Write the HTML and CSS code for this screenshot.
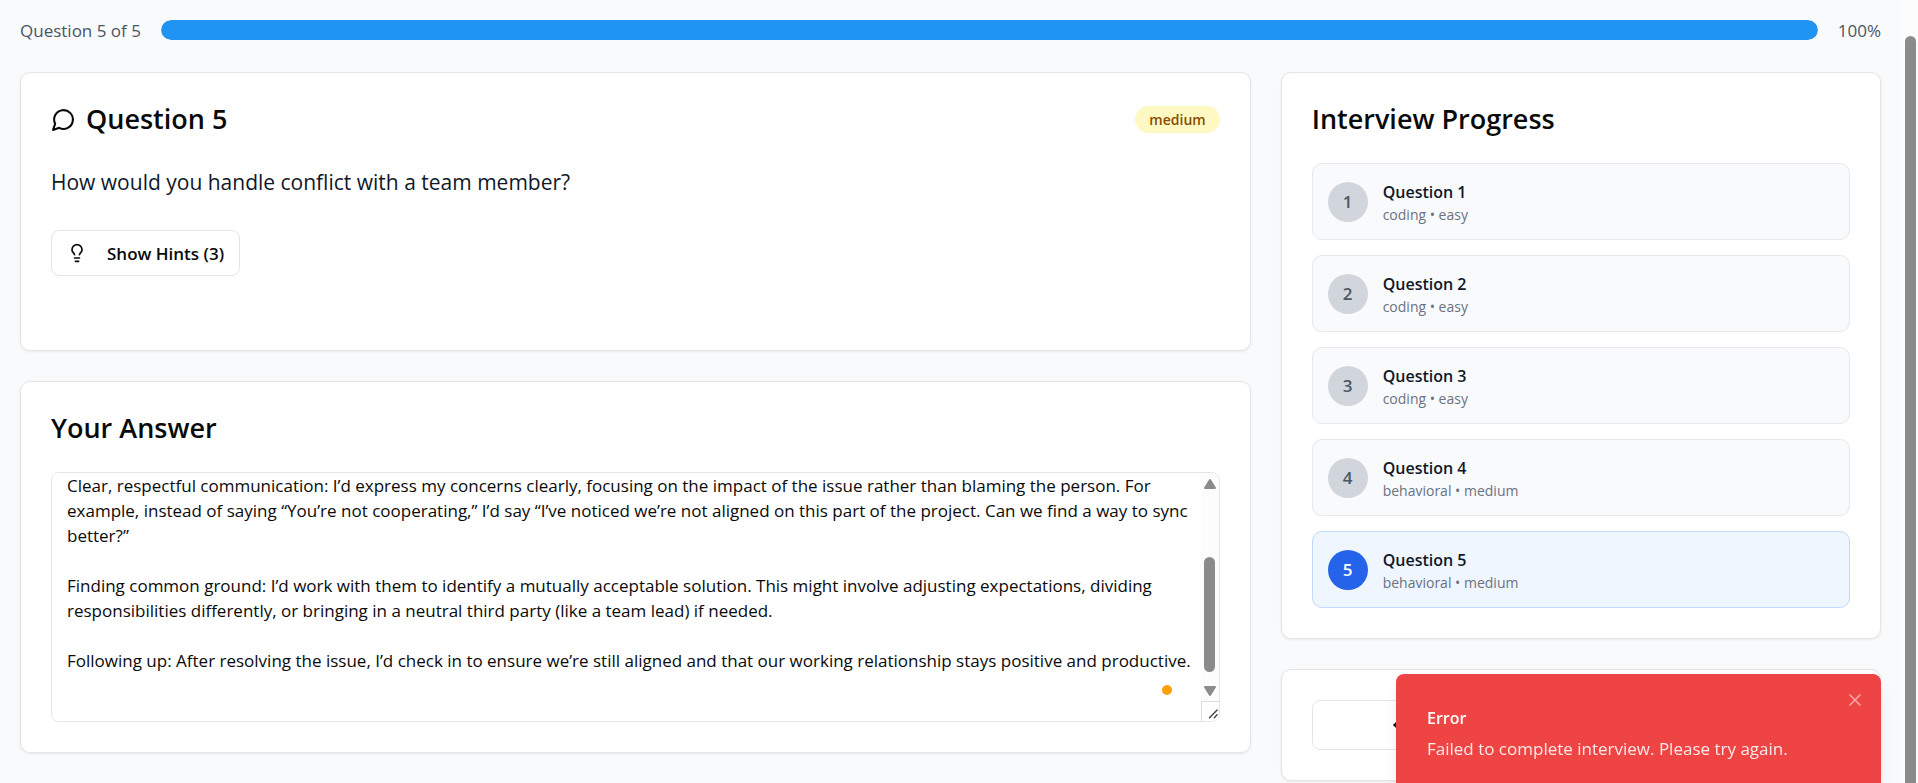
FILE: index.html
```html
<!DOCTYPE html>
<html lang="en">
<head>
<meta charset="utf-8">
<meta name="viewport" content="width=device-width, initial-scale=1">
<title>Interview</title>
<link rel="stylesheet" href="styles.css">
</head>
<body>
<div class="viewport">
  <div class="page">
    <header class="progress-row">
      <span id="progress-label">Question 5 of 5</span>
      <div class="progress" role="progressbar" aria-labelledby="progress-label" aria-valuenow="100" aria-valuemin="0" aria-valuemax="100">
        <div class="progress-fill" style="width: 100%"></div>
      </div>
      <span>100%</span>
    </header>

    <main class="columns">
      <div class="stack">
        <section class="card question-card">
          <div class="card-head">
            <h2 class="card-title">
              <svg class="title-icon" viewBox="0 0 24 24" aria-hidden="true"><path d="M7.9 20A9 9 0 1 0 4 16.1L2 22Z"/></svg>
              Question 5
            </h2>
            <span class="pill">medium</span>
          </div>
          <p class="question-text">How would you handle conflict with a team member?</p>
          <button type="button" class="hint-button">
            <svg class="hint-icon" viewBox="0 0 24 24" aria-hidden="true"><path d="M15 14c.2-1 .7-1.7 1.5-2.5 1-.9 1.5-2.2 1.5-3.5A6 6 0 0 0 6 8c0 1 .2 2.2 1.5 3.5.7.7 1.3 1.5 1.5 2.5"/><path d="M9 18h6"/><path d="M10 22h4"/></svg>
            Show Hints (3)
          </button>
        </section>

        <section class="card">
          <h2 class="card-title"><label for="answer">Your Answer</label></h2>
          <div class="answer-box">
            <textarea id="answer" class="answer" spellcheck="false">Clear, respectful communication: I’d express my concerns clearly, focusing on the impact of the issue rather than blaming the person. For example, instead of saying “You’re not cooperating,” I’d say “I’ve noticed we’re not aligned on this part of the project. Can we find a way to sync better?”

Finding common ground: I’d work with them to identify a mutually acceptable solution. This might involve adjusting expectations, dividing responsibilities differently, or bringing in a neutral third party (like a team lead) if needed.

Following up: After resolving the issue, I’d check in to ensure we’re still aligned and that our working relationship stays positive and productive.</textarea>
            <div class="scrollbar" aria-hidden="true">
              <svg class="arrow" viewBox="0 0 12 10"><path d="M6 1 11 9H1Z"/></svg>
              <div class="track"><div class="thumb"></div></div>
              <svg class="arrow" viewBox="0 0 12 10"><path d="M6 9 11 1H1Z"/></svg>
              <svg class="grip" viewBox="0 0 18 19"><path d="M8 16 16 8M13 16 16 13"/></svg>
            </div>
            <span class="status-dot"></span>
          </div>
        </section>
      </div>

      <div class="stack">
        <section class="card">
          <h2 class="card-title">Interview Progress</h2>
          <ol class="steps">
            <li class="step"><span class="step-number">1</span><div><div class="step-name">Question 1</div><div class="step-kind">coding • easy</div></div></li>
            <li class="step"><span class="step-number">2</span><div><div class="step-name">Question 2</div><div class="step-kind">coding • easy</div></div></li>
            <li class="step"><span class="step-number">3</span><div><div class="step-name">Question 3</div><div class="step-kind">coding • easy</div></div></li>
            <li class="step"><span class="step-number">4</span><div><div class="step-name">Question 4</div><div class="step-kind">behavioral • medium</div></div></li>
            <li class="step current" aria-current="step"><span class="step-number">5</span><div><div class="step-name">Question 5</div><div class="step-kind">behavioral • medium</div></div></li>
          </ol>
        </section>
        <section class="card">
          <button type="button" class="nav-button" aria-label="Previous question">
            <svg class="nav-icon" viewBox="0 0 24 24" aria-hidden="true"><path d="m12 19-7-7 7-7"/><path d="M19 12H5"/></svg>
          </button>
        </section>
      </div>
    </main>
  </div>
  <div class="page-scrollbar" aria-hidden="true"><div class="page-thumb"></div></div>
</div>

<div class="toast" role="alert">
  <div class="toast-title">Error</div>
  <div class="toast-text">Failed to complete interview. Please try again.</div>
  <button type="button" class="toast-close" aria-label="Close">
    <svg viewBox="0 0 24 24" aria-hidden="true"><path d="M18 6 6 18M6 6l12 12"/></svg>
  </button>
</div>
</body>
</html>
```
FILE: styles.css
```css
* {
  box-sizing: border-box;
  margin: 0;
  padding: 0;
}

body {
  background: #f9fafc;
  color: #0a0a0a;
  font-family: "Open Sans", "Noto Sans", sans-serif;
  font-size: 17px;
  line-height: 25px;
  overflow: hidden;
}

button,
textarea {
  font: inherit;
  color: inherit;
}

svg {
  display: block;
  flex: none;
  fill: none;
  stroke: currentColor;
  stroke-width: 2;
  stroke-linecap: round;
  stroke-linejoin: round;
}

.viewport {
  display: flex;
  height: 100vh;
}

.page {
  flex: 1;
  min-width: 0;
  padding: 18px 20px;
}

.progress-row {
  display: flex;
  align-items: center;
  gap: 20px;
  height: 24px;
  margin-bottom: 30px;
  color: #4a5565;
}

.progress {
  flex: 1;
  height: 20px;
  border-radius: 10px;
  background: #e5e7eb;
  overflow: hidden;
}

.progress-fill {
  height: 100%;
  border-radius: 10px;
  background: #2094f3;
}

.columns {
  display: grid;
  grid-template-columns: repeat(3, minmax(0, 1fr));
  gap: 30px;
  align-items: start;
}

.stack {
  display: grid;
  gap: 30px;
}

.stack:first-child {
  grid-column: span 2;
}

.card {
  padding: 30px;
  border: 1px solid #e5e5e5;
  border-radius: 10px;
  background: #fff;
  box-shadow: 0 1px 3px rgb(0 0 0 / 7%);
}

.question-card {
  padding-bottom: 74px;
}

.card-head {
  display: flex;
  align-items: center;
  justify-content: space-between;
}

.card-title {
  display: flex;
  align-items: center;
  gap: 10px;
  font-size: 27px;
  font-weight: 600;
  line-height: 32px;
}

.title-icon {
  width: 25px;
  height: 25px;
}

.pill {
  padding: 0 14px;
  border-radius: 14px;
  background: #fef9c2;
  color: #894b00;
  font-size: 14px;
  font-weight: 600;
  line-height: 27px;
}

.question-text {
  margin: 30px 0;
  color: #101828;
  font-size: 21px;
  line-height: 35px;
}

.hint-button {
  display: flex;
  align-items: center;
  gap: 20px;
  height: 46px;
  padding: 0 15px;
  border: 1px solid #e5e5e5;
  border-radius: 8px;
  background: #fff;
  font-weight: 600;
}

.hint-icon {
  width: 20px;
  height: 20px;
}

.answer-box {
  position: relative;
  display: flex;
  height: 250px;
  margin-top: 28px;
  border: 1px solid #e5e5e5;
  border-radius: 8px;
  overflow: hidden;
}

.answer {
  flex: 1;
  min-width: 0;
  padding: 0 5px 0 15px;
  border: 0;
  outline: 0;
  resize: none;
  overflow: hidden;
  background: #fff;
}

.scrollbar {
  display: flex;
  flex-direction: column;
  align-items: center;
  width: 18px;
  padding-top: 6px;
  background: #fcfcfc;
  color: #8b8b8b;
}

.arrow {
  width: 12px;
  height: 10px;
  fill: currentColor;
}

.track {
  flex: 1;
  display: flex;
  align-items: end;
  padding-bottom: 14px;
}

.thumb {
  width: 11px;
  height: 115px;
  border-radius: 6px;
  background: #8b8b8b;
}

.grip {
  width: 18px;
  height: 20px;
  margin-top: 5px;
  border-top: 1px solid #dcdcdc;
  border-left: 1px solid #dcdcdc;
  background: #fff;
  color: #444;
  stroke-width: 1.5;
}

.status-dot {
  position: absolute;
  right: 47px;
  bottom: 26px;
  width: 10px;
  height: 10px;
  border-radius: 50%;
  background: #ff9f0a;
}

.steps {
  display: grid;
  gap: 15px;
  margin-top: 28px;
  list-style: none;
}

.step {
  display: flex;
  align-items: center;
  gap: 15px;
  padding: 15px;
  border: 1px solid #e5e7eb;
  border-radius: 10px;
  background: #f9fafc;
}

.step-number {
  display: grid;
  place-items: center;
  width: 40px;
  height: 40px;
  border-radius: 50%;
  background: #d1d5dc;
  color: #4a5565;
  font-weight: 600;
}

.step-name {
  color: #101828;
  font-size: 16px;
  font-weight: 600;
  line-height: 27px;
}

.step-kind {
  color: #6a7282;
  font-size: 14px;
  line-height: 18px;
}

.current {
  border-color: #bedbff;
  background: #eff6ff;
}

.current .step-number {
  background: #2563eb;
  color: #fff;
}

.nav-button {
  display: flex;
  align-items: center;
  width: 50%;
  height: 50px;
  padding-left: 77px;
  border: 1px solid #e5e5e5;
  border-radius: 8px;
  background: #fff;
}

.nav-icon {
  width: 20px;
  height: 20px;
}

.page-scrollbar {
  width: 17px;
  padding: 36px 2px 0 4px;
  background: #fcfcfc;
}

.page-thumb {
  height: 100%;
  border-radius: 6px 6px 0 0;
  background: #8b8b8b;
}

.toast {
  position: fixed;
  right: 37px;
  bottom: -8px;
  width: 485px;
  padding: 32px 31px 30px;
  border-radius: 8px;
  background: #ef4444;
  color: #fafafa;
  box-shadow: 0 10px 15px -3px rgb(0 0 0 / 10%), 0 4px 6px -4px rgb(0 0 0 / 10%);
}

.toast-title {
  margin-bottom: 5px;
  font-size: 16px;
  font-weight: 600;
}

.toast-text {
  opacity: 0.9;
}

.toast-close {
  position: absolute;
  top: 16px;
  right: 16px;
  width: 20px;
  height: 20px;
  border: 0;
  background: none;
  color: #fca5a5;
}
```
